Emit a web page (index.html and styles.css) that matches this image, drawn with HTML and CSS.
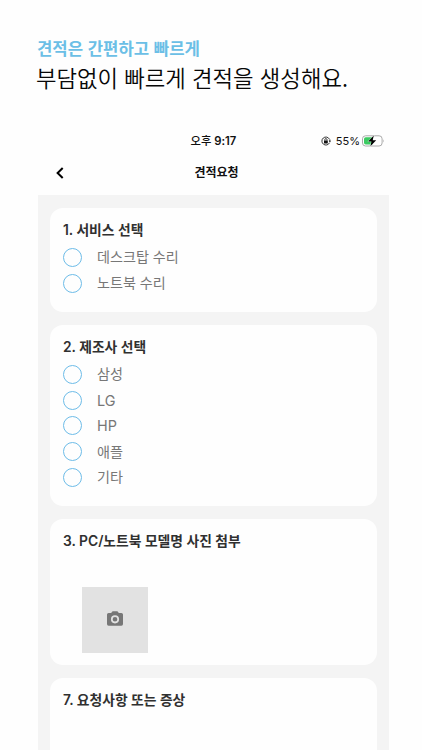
FILE: index.html
```
<!DOCTYPE html>
<html lang="ko">
<head>
<meta charset="utf-8">
<title>견적요청</title>
<link rel="stylesheet" href="styles.css">
</head>
<body>
<header class="intro">
  <p class="eyebrow"><span>견적은 간편하고 빠르게</span></p>
  <h1><span>부담없이 빠르게 견적을 생성해요.</span></h1>
</header>
<main class="phone">
  <div class="status">
    <span class="time"><span class="meridiem">오후</span> 9:17</span>
    <div class="power">
      <svg class="lock" viewBox="0 0 10 10"><path d="M8.4 3.1A4 4 0 1 0 8.5 6.8M8.8 3.4V5.3" fill="none" stroke="#222" stroke-width=".9"/><path d="M7.7 4.8H10L8.9 6.4Z" fill="#222"/><rect x="3" y="4.5" width="3.8" height="3" rx=".4" fill="#111"/><path d="M3.8 4.7V3.7a1.1 1.1 0 0 1 2.2 0v1" fill="none" stroke="#111" stroke-width=".8"/></svg>
      <span class="percent">55%</span>
      <svg class="battery" viewBox="0 0 23 12"><rect x=".5" y=".8" width="19.6" height="10.2" rx="3" fill="#fff" stroke="#aaa"/><path d="M3.7 2.3H10.5V9.5H3.7A1.7 1.7 0 0 1 2 7.8V4A1.7 1.7 0 0 1 3.7 2.3Z" fill="#3ccb62"/><path d="M21.3 4.2Q22.8 5.9 21.3 7.6Z" fill="#aaa"/><path d="M11.8.6 6.2 6.5H9.5L8.4 11.3 14.2 5.2H10.7Z" fill="#000" stroke="#fff" stroke-width=".7" paint-order="stroke"/></svg>
    </div>
  </div>
  <nav class="navbar">
    <svg class="back" viewBox="0 0 8 12"><path d="M6.7 1 1.6 6 6.7 11" fill="none" stroke="#000" stroke-width="2"/></svg>
    <h2>견적요청</h2>
  </nav>
  <div class="form">
    <section class="card services">
      <h3>1. 서비스 선택</h3>
      <ul>
        <li><i class="radio"></i><span>데스크탑 수리</span></li>
        <li><i class="radio"></i><span>노트북 수리</span></li>
      </ul>
    </section>
    <section class="card makers">
      <h3>2. 제조사 선택</h3>
      <ul>
        <li><i class="radio"></i><span>삼성</span></li>
        <li><i class="radio"></i><span class="latin">LG</span></li>
        <li><i class="radio"></i><span class="latin">HP</span></li>
        <li><i class="radio"></i><span>애플</span></li>
        <li><i class="radio"></i><span>기타</span></li>
      </ul>
    </section>
    <section class="card photo">
      <h3>3. PC/노트북 모델명 사진 첨부</h3>
      <div class="upload">
        <svg viewBox="2 2 20 18"><path d="M9 2 7.17 4H4a2 2 0 0 0-2 2v12a2 2 0 0 0 2 2h16a2 2 0 0 0 2-2V6a2 2 0 0 0-2-2h-3.17L15 2H9Z"/><circle class="lens" cx="12" cy="12" r="4"/></svg>
      </div>
    </section>
    <section class="card request">
      <h3>7. 요청사항 또는 증상</h3>
    </section>
  </div>
</main>
</body>
</html>
```
FILE: styles.css
```
* { box-sizing: border-box; }
body {
  margin: 0;
  height: 750px;
  overflow: hidden;
  background: #fefefe;
  font-family: Inter, "Noto Sans CJK KR", sans-serif;
  color: #111;
}
h1, h2, h3, p, ul { margin: 0; padding: 0; }
ul { list-style: none; }
.intro {
  height: 125px;
  padding: 36px 0 0 37px;
  font-family: "Noto Sans CJK KR", sans-serif;
  white-space: nowrap;
}
.eyebrow {
  font-size: 16.7px;
  line-height: 24px;
  font-weight: 700;
  color: #6bbfe6;
}
.intro h1 {
  margin-left: -1px;
  font-size: 22.3px;
  line-height: 34px;
  font-weight: 350;
  color: #080808;
}
.phone {
  width: 351px;
  height: 625px;
  margin-left: 38px;
  display: flex;
  flex-direction: column;
}
.status {
  flex: none;
  height: 32px;
  display: grid;
  grid-template-columns: 1fr auto 1fr;
  align-items: center;
}
.time {
  grid-column: 2;
  margin-top: -2px;
  font-size: 11.3px;
  font-weight: 600;
}
.meridiem { font-weight: 500; }
.power {
  display: flex;
  align-items: center;
  justify-content: flex-end;
  padding-right: 4px;
}
.percent { font-size: 11px; margin: 0 2px 0 5px; }
.lock { width: 10px; height: 10px; }
.battery { width: 23px; height: 12px; }
.navbar {
  flex: none;
  height: 38px;
  display: grid;
  grid-template-columns: 1fr auto 1fr;
  align-items: center;
  padding-bottom: 8px;
}
.back { width: 8px; height: 12px; margin: 1px 0 0 18px; }
.navbar h2 {
  padding: 2px 0 0 6px;
  font-size: 12px;
  line-height: 20px;
  font-weight: 700;
}
.form {
  flex: none;
  height: 555px;
  display: flex;
  flex-direction: column;
  gap: 13px;
  padding: 13px 12px 0;
  background: #f4f4f4;
}
.card {
  flex: none;
  padding: 12px 13px 0;
  border-radius: 13px;
  background: #fefefe;
}
.services { height: 104px; }
.makers { height: 181px; }
.photo { height: 146px; }
.request { height: 100px; border-radius: 13px 13px 0 0; }
.card h3 {
  height: 24.6px;
  font-size: 13.8px;
  line-height: 21px;
  font-weight: 600;
  color: #303030;
  white-space: nowrap;
}
.card li {
  height: 25.7px;
  display: flex;
  align-items: center;
  gap: 15px;
  font-size: 14.1px;
  color: #777;
}
.card li span { margin-top: -2px; }
.card li .latin { margin-top: 0; font-size: 14.4px; }
.radio {
  flex: none;
  width: 19px;
  height: 19px;
  border: 1px solid #6dbce8;
  border-radius: 50%;
}
.upload {
  width: 66px;
  height: 66px;
  margin: 31.4px 0 0 18.5px;
  display: grid;
  place-items: center;
  background: #e2e2e2;
}
.upload svg { width: 16px; height: 15px; margin-top: -3px; fill: #777; }
.upload .lens { fill: #777; stroke: #e2e2e2; stroke-width: 2.2; }
```
